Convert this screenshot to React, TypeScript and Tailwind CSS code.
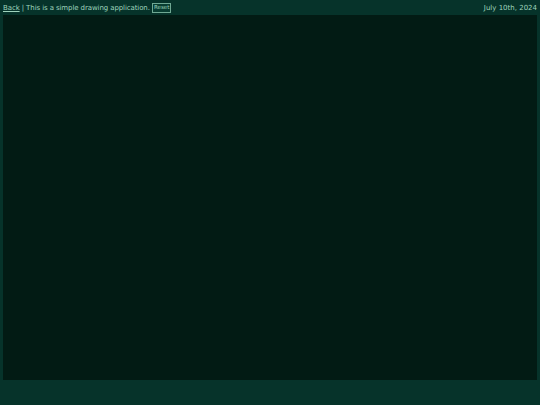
export default function App() {
  return (
    <div className="flex h-[405px] w-[540px] flex-col bg-[#06332a] font-['DejaVu_Sans',sans-serif] text-[#9fd3bd]">
      <header className="flex h-[15px] items-center justify-between px-[3px] pt-[1px] text-[7px] leading-none">
        <div className="flex items-center whitespace-pre tracking-[-0.1px]">
          <a href="#" className="underline">Back</a>
          <span> | This is a simple drawing application. </span>
          <button className="flex h-[10px] items-center border border-[#6fa893] bg-[#083d31] px-[1px] text-[5.5px] leading-none tracking-normal">Reset</button>
        </div>
        <span>July 10th, 2024</span>
      </header>
      <div className="mx-[3px] h-[365px] bg-[#021b14]" />
    </div>
  );
}
